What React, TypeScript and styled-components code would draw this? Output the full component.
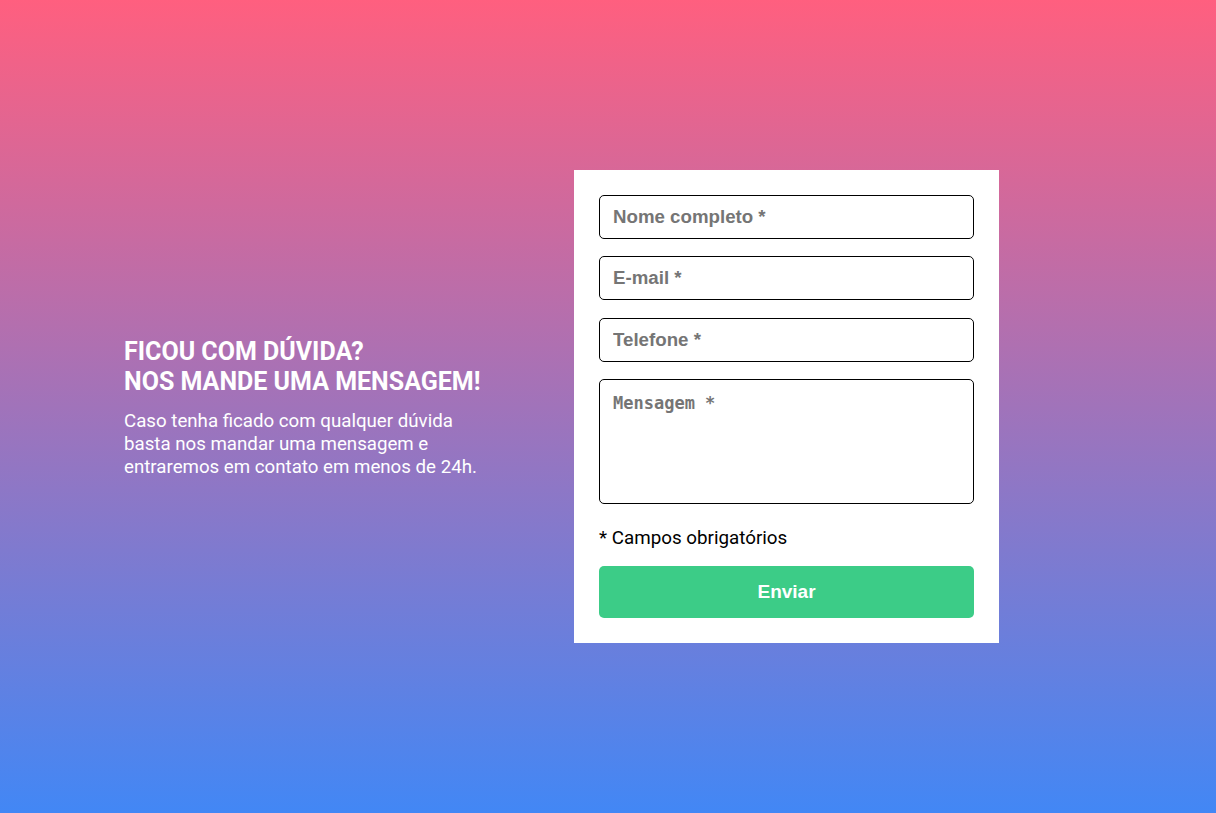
import React from "react";
import styled, { createGlobalStyle } from "styled-components";

const GlobalStyle = createGlobalStyle`
  html, body { margin: 0; padding: 0; }
  body { font-family: Roboto, "Liberation Sans", sans-serif; }
  * { box-sizing: border-box; }
`;

const Page = styled.main`
  width: 1216px;
  height: 813px;
  background: linear-gradient(to bottom, #ff5f7f 0%, #4287f5 100%);
  display: flex;
  align-items: center;
  padding-left: 124px;
`;

const Intro = styled.section`
  width: 450px;
  color: #ffffff;
  padding-top: 3px;
`;

const Title = styled.h1`
  margin: 0 0 13px;
  font-family: Roboto, sans-serif;
  font-weight: 700;
  font-size: 25px;
  line-height: 30px;
  text-transform: uppercase;
`;

const Text = styled.p`
  margin: 0;
  width: 370px;
  font-family: Roboto, sans-serif;
  font-size: 18.7px;
  line-height: 23px;
  font-weight: 400;
`;

const Card = styled.form`
  width: 425px;
  background: #ffffff;
  padding: 25px;
  display: flex;
  flex-direction: column;
`;

const Field = styled.input`
  width: 375px;
  height: 44px;
  border: 1px solid #000;
  border-radius: 5px;
  padding: 0 13px;
  margin-bottom: 17.5px;
  font-family: Arial, "Liberation Sans", sans-serif;
  font-weight: 700;
  font-size: 18.7px;
  color: #333;
  outline: none;
  &::placeholder { color: #757575; opacity: 1; }
`;

const Area = styled.textarea`
  width: 375px;
  height: 125px;
  border: 1px solid #000;
  border-radius: 5px;
  padding: 13px 13px;
  margin: 0;
  font-family: "DejaVu Sans Mono", monospace;
  font-weight: 700;
  font-size: 17px;
  resize: none;
  outline: none;
  display: block;
  &::placeholder { color: #757575; opacity: 1; }
`;

const Note = styled.p`
  margin: 23px 0 16px;
  font-family: Roboto, sans-serif;
  font-size: 18.8px;
  line-height: 23px;
  color: #000;
`;

const Submit = styled.button`
  width: 375px;
  height: 52px;
  border: none;
  border-radius: 5px;
  background: #3ccc87;
  color: #fff;
  font-family: Arial, "Liberation Sans", sans-serif;
  font-weight: 700;
  font-size: 19px;
  cursor: pointer;
`;

export default function App() {
  return (
    <>
      <GlobalStyle />
      <Page>
        <Intro>
          <Title>
            Ficou com dúvida?
            <br />
            Nos mande uma mensagem!
          </Title>
          <Text>
            Caso tenha ficado com qualquer dúvida basta nos mandar uma mensagem e entraremos em contato em menos de 24h.
          </Text>
        </Intro>
        <Card onSubmit={(e) => e.preventDefault()}>
          <Field placeholder="Nome completo *" />
          <Field placeholder="E-mail *" />
          <Field placeholder="Telefone *" />
          <Area placeholder="Mensagem *" />
          <Note>* Campos obrigatórios</Note>
          <Submit type="submit">Enviar</Submit>
        </Card>
      </Page>
    </>
  );
}
